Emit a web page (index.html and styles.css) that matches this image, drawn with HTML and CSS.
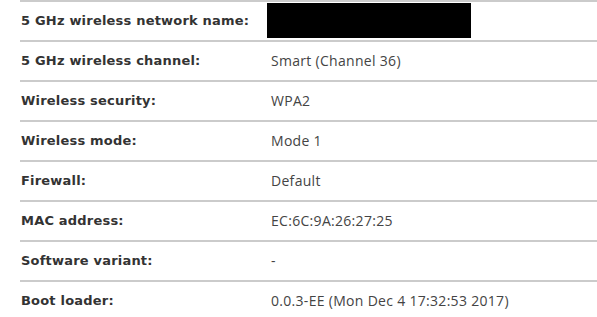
FILE: index.html
```html
<!DOCTYPE html>
<html>
<head>
<meta charset="utf-8">
<link rel="stylesheet" href="styles.css">
</head>
<body>
<div class="info">
  <div class="row"><div class="label">5 GHz wireless network name:</div><div class="value"><span class="redacted"></span></div></div>
  <div class="row"><div class="label">5 GHz wireless channel:</div><div class="value">Smart (Channel 36)</div></div>
  <div class="row"><div class="label">Wireless security:</div><div class="value">WPA2</div></div>
  <div class="row"><div class="label">Wireless mode:</div><div class="value">Mode 1</div></div>
  <div class="row"><div class="label">Firewall:</div><div class="value">Default</div></div>
  <div class="row"><div class="label">MAC address:</div><div class="value">EC:6C:9A:26:27:25</div></div>
  <div class="row"><div class="label">Software variant:</div><div class="value">-</div></div>
  <div class="row"><div class="label">Boot loader:</div><div class="value">0.0.3-EE (Mon Dec 4 17:32:53 2017)</div></div>
</div>
</body>
</html>
```
FILE: styles.css
```css
html, body {
  margin: 0;
  padding: 0;
  background: #fff;
  overflow: hidden;
}
.info {
  padding-left: 20px;
}
.row {
  display: grid;
  grid-template-columns: 251px 1fr;
  box-sizing: border-box;
  height: 40px;
  padding-bottom: 1px;
  border-top: 2px solid #cbcbcb;
  align-items: center;
}
.label {
  padding-left: 1px;
  font-family: "DejaVu Sans", sans-serif;
  font-weight: bold;
  font-size: 13px;
  letter-spacing: 0.2px;
  color: #333;
}
.value {
  font-family: "Open Sans", sans-serif;
  font-size: 14px;
  letter-spacing: 0.3px;
  color: #444;
}
.redacted {
  display: block;
  width: 204px;
  height: 35px;
  margin-left: -4px;
  background: #000;
}
```
